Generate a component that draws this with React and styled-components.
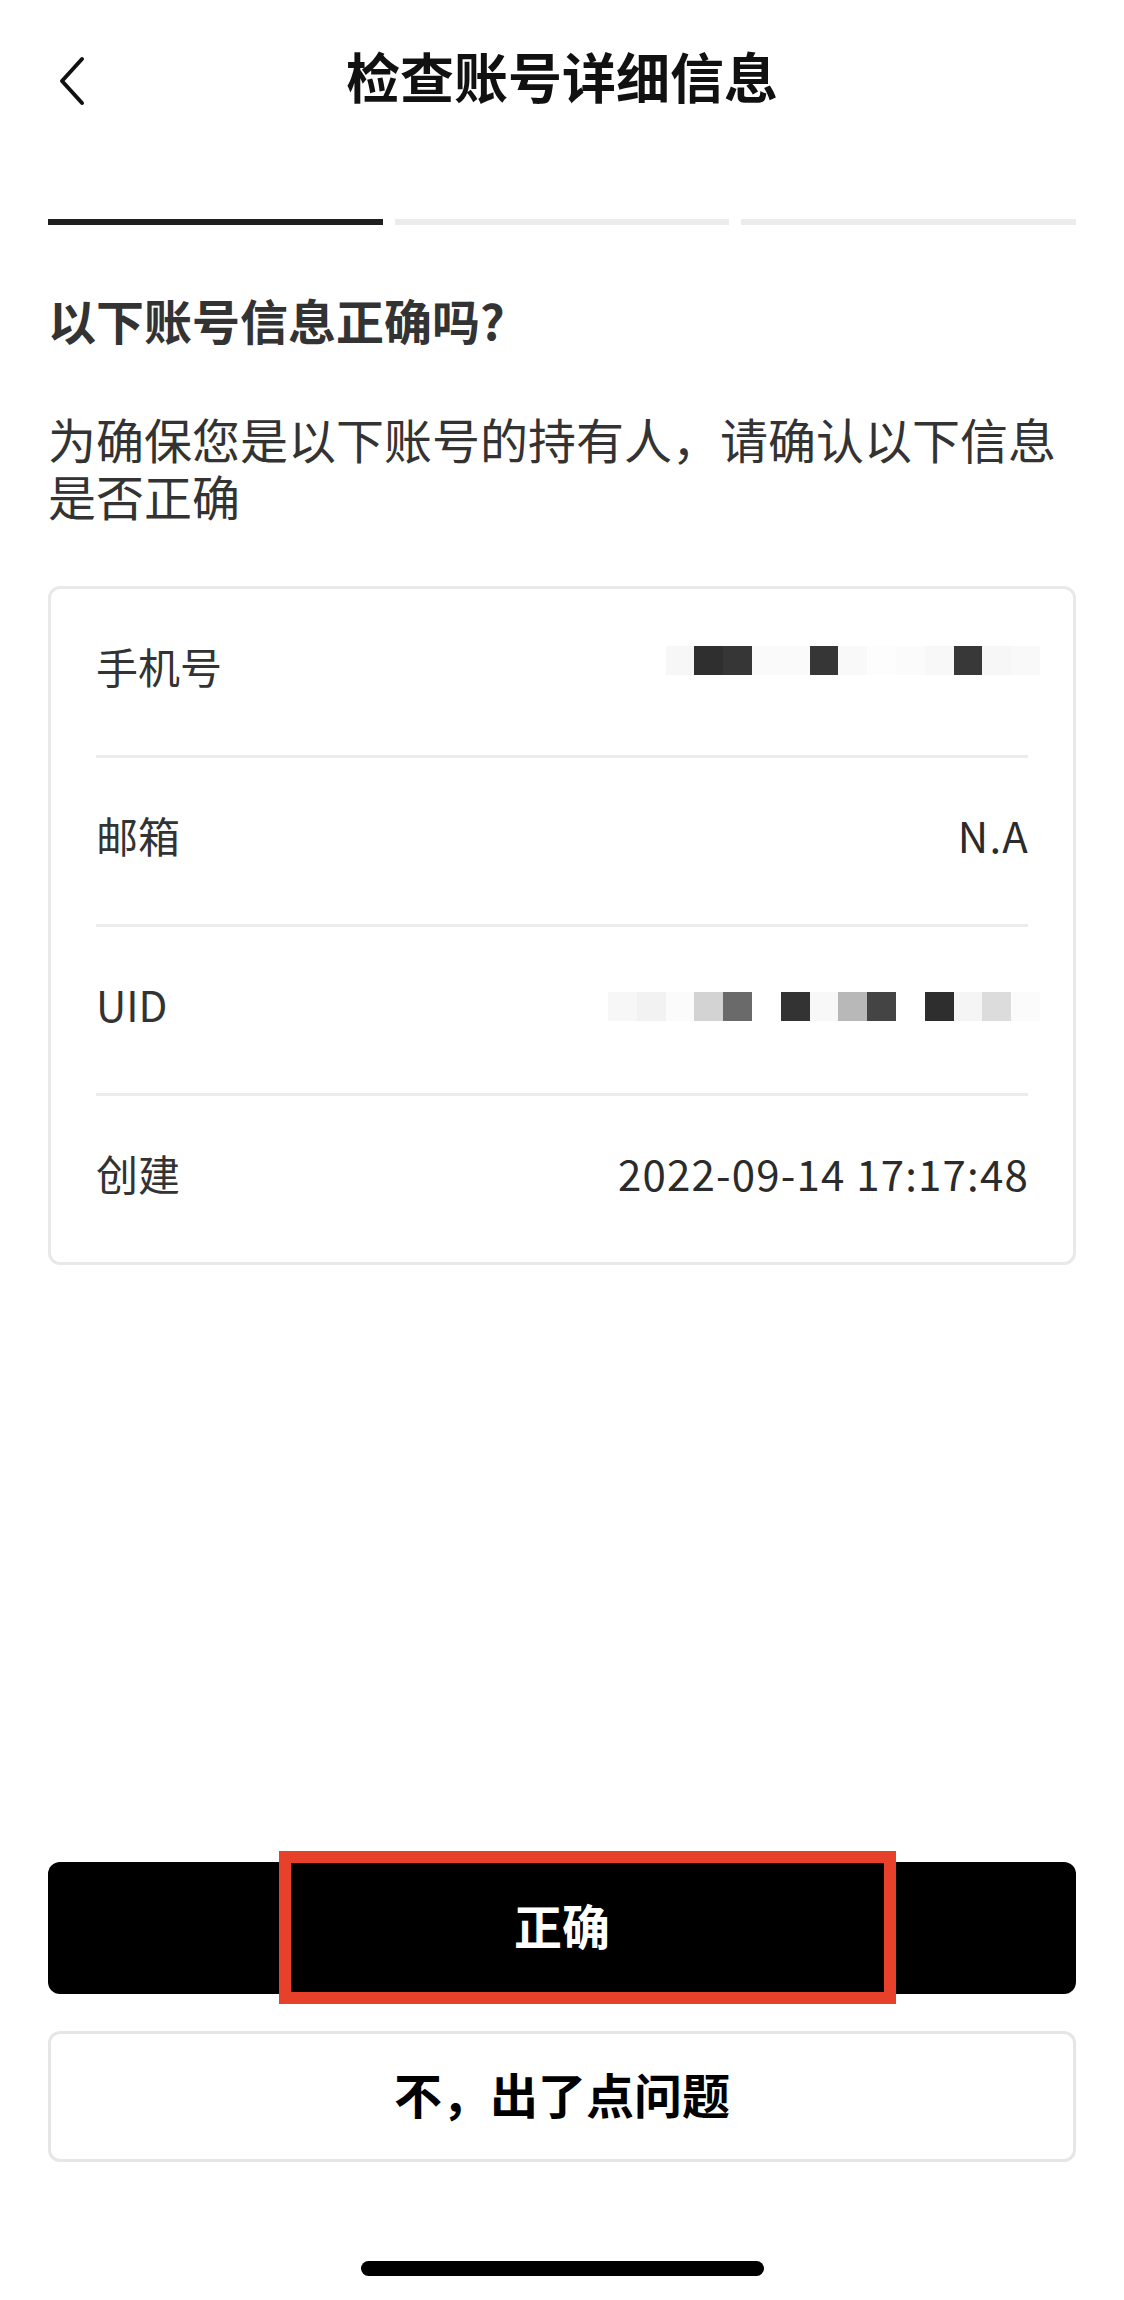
import React from 'react';
import styled, {createGlobalStyle} from 'styled-components';

const GlobalStyle = createGlobalStyle`
  html, body {
    margin: 0;
    padding: 0;
    background: #ffffff;
  }
  body {
    font-family: "Noto Sans CJK SC", "Noto Sans", sans-serif;
    color: #333333;
  }
`;

const Screen = styled.div`
  width: 1124px;
  height: 2300px;
  box-sizing: border-box;
  padding: 0 48px;
  display: flex;
  flex-direction: column;
  background: #ffffff;
`;

const Header = styled.header`
  height: 162px;
  display: grid;
  grid-template-columns: 1fr auto 1fr;
  align-items: center;
`;

const BackButton = styled.button`
  justify-self: start;
  margin-left: 10px;
  padding: 0;
  border: none;
  background: none;
  display: flex;
  align-items: center;
  cursor: pointer;
`;

const Title = styled.h1`
  margin: 0 0 12px;
  font-size: 54px;
  font-weight: 700;
  color: #111111;
  letter-spacing: 0;
`;

const Steps = styled.div`
  margin-top: 57px;
  display: grid;
  grid-template-columns: repeat(3, 1fr);
  gap: 12px;
`;

const Step = styled.div`
  height: 6px;
  background: ${p => (p.$active ? '#1f1f1f' : '#ececec')};
`;

const Heading = styled.h2`
  margin: 65px 0 0;
  font-size: 48px;
  line-height: 58px;
  font-weight: 700;
  color: #333333;
`;

const Intro = styled.p`
  margin: 62px 0 0;
  font-size: 48px;
  line-height: 57px;
  color: #333333;
`;

const InfoCard = styled.div`
  margin-top: 62px;
  border: 3px solid #e9e9e9;
  border-radius: 12px;
  padding: 0 45px;
`;

const InfoRow = styled.div`
  height: 152px;
  padding-bottom: 14px;
  display: flex;
  align-items: center;
  justify-content: space-between;
  font-size: 42px;
  color: #333333;

  & + & {
    border-top: 3px solid #ececec;
  }
`;

const Label = styled.span`
  color: #333333;
`;

const Value = styled.span`
  color: #2b2b2b;
  letter-spacing: 1.2px;
  margin-right: -1px;
`;

const Mosaic = styled.div`
  display: flex;
  margin-right: -12px;
  margin-bottom: ${p => p.$lift || 0}px;
`;

const Cell = styled.span`
  width: 28.8px;
  height: 29px;
  background: ${p => p.$shade};
`;

const Actions = styled.div`
  margin-top: auto;
  display: flex;
  flex-direction: column;
  gap: 37px;
`;

const PrimaryWrap = styled.div`
  position: relative;
`;

const PrimaryButton = styled.button`
  width: 100%;
  height: 132px;
  padding: 0 0 8px;
  border: none;
  border-radius: 12px;
  background: #000000;
  color: #ffffff;
  font-family: inherit;
  font-size: 48px;
  font-weight: 700;
  cursor: pointer;
`;

const Highlight = styled.div`
  position: absolute;
  top: -11px;
  left: 231px;
  width: 617px;
  height: 153px;
  box-sizing: border-box;
  border: 12px solid #e8412b;
  pointer-events: none;
`;

const SecondaryButton = styled.button`
  width: 100%;
  height: 131px;
  padding: 0 0 8px;
  border: 3px solid #e6e6e6;
  border-radius: 12px;
  background: #ffffff;
  color: #000000;
  font-family: inherit;
  font-size: 48px;
  font-weight: 700;
  cursor: pointer;
`;

const HomeBar = styled.div`
  width: 403px;
  height: 15px;
  border-radius: 8px;
  background: #000000;
  margin: 99px auto 24px;
`;

const phoneShades = ['#f7f7f7', '#2f2f2f', '#363636', '#fafafa', '#fafafa', '#363636', '#f9f9f9',
  '#fdfdfd', '#fbfbfb', '#f8f8f8', '#383838', '#f7f7f7', '#f9f9f9'];
const uidShades = ['#f7f7f7', '#f2f2f2', '#fbfbfb', '#d3d3d3', '#6a6a6a', '#ffffff', '#333333',
  '#f8f8f8', '#b8b8b8', '#444444', '#ffffff', '#2e2e2e', '#f5f5f5', '#dcdcdc', '#fbfbfb'];

const Blur = ({shades, lift}) => (
  <Mosaic $lift={lift}>
    {shades.map((s, i) => <Cell key={i} $shade={s}/>)}
  </Mosaic>
);

const App = () => {
  return (
    <Screen>
      <GlobalStyle/>
      <Header>
        <BackButton aria-label="返回">
          <svg width="28" height="50" viewBox="0 0 28 50">
            <path d="M24 3 L4 25 L24 47" fill="none" stroke="#111" strokeWidth="4" strokeLinecap="round" strokeLinejoin="round"/>
          </svg>
        </BackButton>
        <Title>检查账号详细信息</Title>
      </Header>

      <Steps>
        <Step $active/>
        <Step/>
        <Step/>
      </Steps>

      <Heading>以下账号信息正确吗?</Heading>
      <Intro>为确保您是以下账号的持有人，请确认以下信息是否正确</Intro>

      <InfoCard>
        <InfoRow>
          <Label>手机号</Label>
          <Blur shades={phoneShades} lift={10}/>
        </InfoRow>
        <InfoRow>
          <Label>邮箱</Label>
          <Value>N.A</Value>
        </InfoRow>
        <InfoRow>
          <Label>UID</Label>
          <Blur shades={uidShades} lift={-6}/>
        </InfoRow>
        <InfoRow>
          <Label>创建</Label>
          <Value>2022-09-14 17:17:48</Value>
        </InfoRow>
      </InfoCard>

      <Actions>
        <PrimaryWrap>
          <PrimaryButton>正确</PrimaryButton>
          <Highlight/>
        </PrimaryWrap>
        <SecondaryButton>不，出了点问题</SecondaryButton>
      </Actions>

      <HomeBar/>
    </Screen>
  );
};

export default App;
